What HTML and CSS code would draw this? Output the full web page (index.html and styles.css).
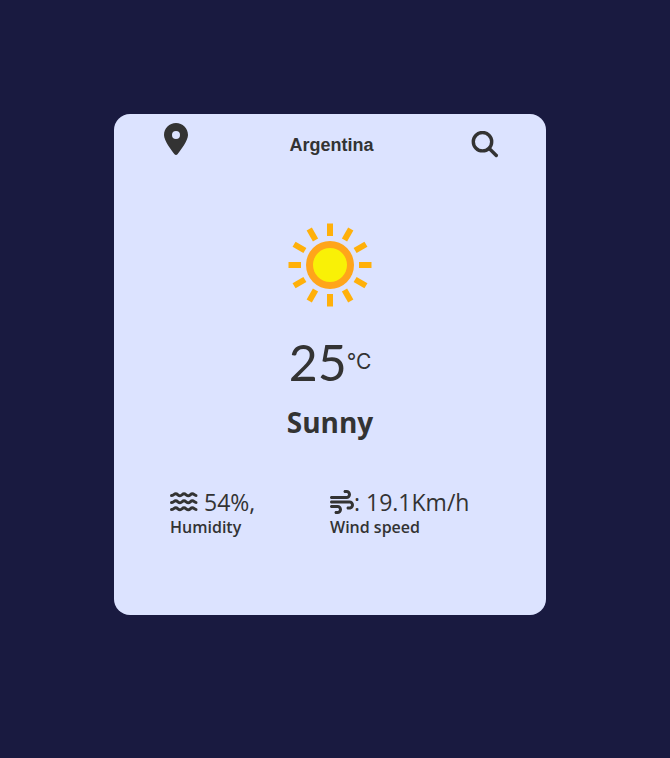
FILE: index.html
```html
<!DOCTYPE html>
<html lang="en">
<head>
<meta charset="utf-8">
<meta name="viewport" content="width=device-width, initial-scale=1">
<title>Weather</title>
<link rel="stylesheet" href="styles.css">
</head>
<body>
<main class="card">
  <header class="bar">
    <svg class="pin" viewBox="0 0 384 512" preserveAspectRatio="xMinYMid" aria-hidden="true"><path d="M215.700 499.200C267 435 384 279.400 384 192C384 86 298 0 192 0S0 86 0 192c0 87.400 117 243 168.300 307.200c12.300 15.300 35.100 15.300 47.400 0zM192 128a64 64 0 1 1 0 128 64 64 0 1 1 0-128z"/></svg>
    <h1 class="place">Argentina</h1>
    <button class="search" type="button" aria-label="Search"><svg viewBox="0 0 28 28" aria-hidden="true"><circle cx="11.500" cy="10.700" r="9.200"/><path d="M18.500 17.700L25.300 24.500"/></svg></button>
  </header>
  <section class="now">
    <svg class="sun" viewBox="0 0 86 86" aria-hidden="true">
      <g class="rays">
        <path id="ray" d="M43 1.500V14"/>
        <use href="#ray" transform="rotate(30 43 43)"/>
        <use href="#ray" transform="rotate(60 43 43)"/>
        <use href="#ray" transform="rotate(90 43 43)"/>
        <use href="#ray" transform="rotate(120 43 43)"/>
        <use href="#ray" transform="rotate(150 43 43)"/>
        <use href="#ray" transform="rotate(180 43 43)"/>
        <use href="#ray" transform="rotate(210 43 43)"/>
        <use href="#ray" transform="rotate(240 43 43)"/>
        <use href="#ray" transform="rotate(270 43 43)"/>
        <use href="#ray" transform="rotate(300 43 43)"/>
        <use href="#ray" transform="rotate(330 43 43)"/>
      </g>
      <circle class="ring" cx="43" cy="43" r="24"/>
      <circle class="core" cx="43" cy="43" r="17"/>
    </svg>
    <p class="temp">25<span class="unit">°C</span></p>
    <h2 class="sky">Sunny</h2>
  </section>
  <section class="stats">
    <div class="stat">
      <p class="value"><svg class="waves" viewBox="0 0 28 24" aria-hidden="true"><path id="wave" d="M1.500 5.500C3.500 5.500 4 3.800 5.700 3.800C7.800 3.800 8 5.800 10 5.800S12.200 3.800 14 3.800S16.500 5.800 18.300 5.800S20.500 3.800 22.300 3.800C24 3.800 24.500 5.500 26 5.500"/><use href="#wave" y="7"/><use href="#wave" y="14"/></svg><span class="number">54%,</span></p>
      <p class="label">Humidity</p>
    </div>
    <div class="stat">
      <p class="value"><svg class="wind" viewBox="0 0 512 512" aria-hidden="true"><path d="M288 32c0 17.700 14.300 32 32 32h32c17.700 0 32 14.300 32 32s-14.300 32-32 32H32c-17.700 0-32 14.300-32 32s14.300 32 32 32h320c53 0 96-43 96-96s-43-96-96-96h-32c-17.700 0-32 14.300-32 32zm64 352c0 17.700 14.300 32 32 32h32c53 0 96-43 96-96s-43-96-96-96H32c-17.700 0-32 14.300-32 32s14.300 32 32 32h384c17.700 0 32 14.300 32 32s-14.300 32-32 32h-32c-17.700 0-32 14.300-32 32zM128 512h32c53 0 96-43 96-96s-43-96-96-96H32c-17.700 0-32 14.300-32 32s14.300 32 32 32h128c17.700 0 32 14.300 32 32s-14.300 32-32 32h-32c-17.700 0-32 14.300-32 32s14.300 32 32 32z"/></svg><span>: 19.1Km/h</span></p>
      <p class="label">Wind speed</p>
    </div>
  </section>
</main>
</body>
</html>
```

FILE: styles.css
```css
* { box-sizing: border-box; margin: 0; }

body {
  min-height: 100vh;
  padding: 114px 124px 143px 114px;
  display: grid;
  background: #191a40;
  color: #333;
  font-family: "Open Sans", "Noto Sans", sans-serif;
}

.card {
  display: flex;
  flex-direction: column;
  border-radius: 16px;
  background: #dce3ff;
}

.bar {
  display: flex;
  align-items: center;
  justify-content: space-between;
  height: 62px;
  padding: 0 47px 0 50px;
}

.pin { width: 28px; height: 32px; margin-bottom: 12px; fill: #333; }

.place { font: bold 18px/24px "Liberation Sans", sans-serif; }

.search {
  display: flex;
  padding: 0;
  border: 0;
  background: none;
  cursor: pointer;
}

.search svg {
  width: 28px;
  height: 28px;
  fill: none;
  stroke: #333;
  stroke-width: 3.4;
  stroke-linecap: round;
}

.now {
  display: flex;
  flex-direction: column;
  align-items: center;
  padding-top: 46px;
}

.sun { width: 86px; height: 86px; }
.rays { stroke: #ffb00a; stroke-width: 6; }
.ring { fill: #ffa51a; }
.core { fill: #f9f106; }

.temp {
  display: flex;
  margin-top: 24px;
  font-family: Lato, sans-serif;
  font-size: 50px;
  line-height: 60px;
}

.unit { font-family: Inter, sans-serif; font-size: 21px; }

.sky { margin-top: 10px; font-size: 28px; line-height: 40px; }

.stats {
  display: grid;
  grid-template-columns: 160px 1fr;
  margin-top: 45px;
  padding: 0 56px;
}

.value {
  display: flex;
  align-items: center;
  height: 30px;
  font-size: 23px;
  line-height: 30px;
  white-space: nowrap;
}

.number { margin-left: 6px; }

.waves {
  width: 28px;
  height: 24px;
  fill: none;
  stroke: #333;
  stroke-width: 3;
  stroke-linecap: round;
}

.wind { width: 24px; height: 24px; fill: #333; }

.label { font-size: 16px; font-weight: 600; line-height: 20px; }
```
